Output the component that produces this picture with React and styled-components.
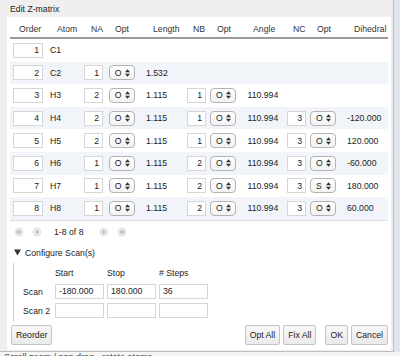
import React from 'react';
import styled, { createGlobalStyle } from 'styled-components';

const GlobalStyle = createGlobalStyle`
  html, body {
    margin: 0;
    padding: 0;
    background: #dfe5eb;
  }
  body {
    font-family: "Liberation Sans", Arial, sans-serif;
    font-size: 8.7px;
    color: #222;
  }
`;

const Screen = styled.div`
  width: 400px;
  height: 356px;
  overflow: hidden;
  display: flex;
  flex-direction: column;
`;

const Dialog = styled.div`
  width: 394px;
  height: 352px;
  box-sizing: border-box;
  flex-shrink: 0;
  display: flex;
  flex-direction: column;
  background: #efefef;
  border-right: 1px solid #bdbdbd;
  border-bottom: 1px solid #bdbdbd;
`;

const TitleBar = styled.div`
  height: 17px;
  display: flex;
  align-items: center;
  padding-left: 10px;
  color: #1e1e1e;
`;

const Content = styled.div`
  flex: 1;
  background: #fff;
  margin: 0 2px 1px 7px;
  padding: 4px 3px 0 3px;
  display: flex;
  flex-direction: column;
`;

const COLS = '37px 34px 25px 34px 43px 25px 34px 41px 25px 34px 48px';

const columns = [
  { label: 'Order', head: 9, cell: 3 },
  { label: 'Atom', head: 10, cell: 3 },
  { label: 'NA', head: 10, cell: 3 },
  { label: 'Opt', head: 9, cell: 2.7 },
  { label: 'Length', head: 13, cell: 6 },
  { label: 'NB', head: 10, cell: 4 },
  { label: 'Opt', head: 9, cell: 2 },
  { label: 'Angle', head: 11, cell: 5.5 },
  { label: 'NC', head: 10, cell: 4 },
  { label: 'Opt', head: 9, cell: 2 },
  { label: 'Dihedral', head: 12, cell: 5 },
];

const rows = [
  { order: 1, atom: 'C1' },
  { order: 2, atom: 'C2', na: 1, naOpt: 'O', length: '1.532' },
  { order: 3, atom: 'H3', na: 2, naOpt: 'O', length: '1.115', nb: 1, nbOpt: 'O', angle: '110.994' },
  { order: 4, atom: 'H4', na: 2, naOpt: 'O', length: '1.115', nb: 1, nbOpt: 'O', angle: '110.994', nc: 3, ncOpt: 'O', dihedral: '-120.000' },
  { order: 5, atom: 'H5', na: 2, naOpt: 'O', length: '1.115', nb: 1, nbOpt: 'O', angle: '110.994', nc: 3, ncOpt: 'O', dihedral: '120.000' },
  { order: 6, atom: 'H6', na: 1, naOpt: 'O', length: '1.115', nb: 2, nbOpt: 'O', angle: '110.994', nc: 3, ncOpt: 'O', dihedral: '-60.000' },
  { order: 7, atom: 'H7', na: 1, naOpt: 'O', length: '1.115', nb: 2, nbOpt: 'O', angle: '110.994', nc: 3, ncOpt: 'S', dihedral: '180.000' },
  { order: 8, atom: 'H8', na: 1, naOpt: 'O', length: '1.115', nb: 2, nbOpt: 'O', angle: '110.994', nc: 3, ncOpt: 'O', dihedral: '60.000' },
];

const Table = styled.div`
  display: flex;
  flex-direction: column;
  border-bottom: 1px solid #dedede;
`;

const HeadRow = styled.div`
  display: grid;
  grid-template-columns: ${COLS};
  height: 16px;
  border-bottom: 2px solid #9a9a9a;
  color: #333;
`;

const Row = styled.div`
  display: grid;
  grid-template-columns: ${COLS};
  height: 22.6px;
  background: ${(p) => (p.$striped ? '#f1f5fa' : '#fff')};
`;

const Cell = styled.div`
  display: flex;
  align-items: center;
  padding-left: ${(p) => p.$pad}px;
  white-space: nowrap;
`;

const NumBox = styled.div`
  box-sizing: border-box;
  width: ${(p) => p.$w}px;
  height: 15px;
  border: 1px solid #d6d6d6;
  background: #fff;
  display: flex;
  align-items: center;
  justify-content: ${(p) => (p.$left ? 'flex-start' : 'flex-end')};
  padding: 0 3px;
`;

const OptBox = styled.div`
  box-sizing: border-box;
  width: 26px;
  height: 15px;
  border: 1px solid #b3b3b3;
  border-radius: 4px;
  background: linear-gradient(#fdfdfd, #f3f3f3);
  display: flex;
  align-items: center;
  justify-content: space-between;
  padding: 0 4px 0 5px;
`;

const Arrows = () => (
  <svg width="5" height="8" viewBox="0 0 5 8">
    <polygon points="0,3.3 2.5,0.3 5,3.3" fill="#333" />
    <polygon points="0,4.7 2.5,7.7 5,4.7" fill="#333" />
  </svg>
);

const Opt = ({ value }) => (
  <OptBox>
    <span>{value}</span>
    <Arrows />
  </OptBox>
);

const Pager = styled.div`
  height: 22px;
  display: flex;
  align-items: center;
  gap: 8px;
  padding-left: 4px;
`;

const PagerText = styled.span`
  margin: 0 8px 0 4px;
`;

const PageIcon = ({ kind }) => (
  <svg width="10" height="10" viewBox="0 0 10 10">
    <circle cx="5" cy="5" r="4.5" fill="#e7e7e7" />
    {kind === 'first' && (
      <>
        <rect x="3" y="3" width="0.9" height="4" fill="#a9a9a9" />
        <polygon points="6.5,3 4.2,5 6.5,7" fill="#a9a9a9" />
      </>
    )}
    {kind === 'prev' && <polygon points="6,3 3.7,5 6,7" fill="#a9a9a9" />}
    {kind === 'next' && <polygon points="4,3 6.3,5 4,7" fill="#a9a9a9" />}
    {kind === 'last' && (
      <>
        <polygon points="3.5,3 5.8,5 3.5,7" fill="#a9a9a9" />
        <rect x="6.1" y="3" width="0.9" height="4" fill="#a9a9a9" />
      </>
    )}
  </svg>
);

const Disclosure = styled.div`
  height: 20px;
  display: flex;
  align-items: center;
  gap: 4px;
  padding-left: 4px;
`;

const ScanBlock = styled.div`
  margin-left: 3px;
  border-left: 1px solid #cdcdcd;
  height: 58px;
  box-sizing: border-box;
  padding-top: 2px;
  display: grid;
  grid-template-columns: 38px 49px 49px 49px;
  grid-template-rows: 17px 17px 17px;
  column-gap: 3px;
  row-gap: 2px;
`;

const ScanLabel = styled.div`
  display: flex;
  align-items: center;
  padding-left: ${(p) => p.$pad || 0}px;
`;

const ButtonBar = styled.div`
  margin-top: 4px;
  display: flex;
  align-items: center;
  padding: 0 0 0 1px;
`;

const Spacer = styled.div`
  flex: 1;
`;

const Button = styled.button`
  height: 20px;
  padding: 0 4px;
  margin-left: ${(p) => p.$gap || 0}px;
  font-family: inherit;
  font-size: 8.7px;
  color: #222;
  border: 1px solid #c4c4c4;
  border-radius: 2px;
  background: linear-gradient(#f8f8f8, #eaeaea);
`;

const Beneath = styled.div`
  height: 4px;
  overflow: hidden;
  background: #f5f5f5;
  color: #444;
  font-size: 9px;
  line-height: 9px;
  padding: 1px 0 0 4px;
  white-space: nowrap;
`;

const App = () => {
  return (
    <Screen>
      <GlobalStyle />
      <Dialog>
        <TitleBar>Edit Z-matrix</TitleBar>
        <Content>
          <Table>
            <HeadRow>
              {columns.map((c, i) => (
                <Cell key={i} $pad={c.head}>{c.label}</Cell>
              ))}
            </HeadRow>
            {rows.map((r, i) => (
              <Row key={r.order} $striped={i % 2 === 1}>
                <Cell $pad={columns[0].cell}><NumBox $w={30}>{r.order}</NumBox></Cell>
                <Cell $pad={columns[1].cell}>{r.atom}</Cell>
                <Cell $pad={columns[2].cell}>{r.na && <NumBox $w={19}>{r.na}</NumBox>}</Cell>
                <Cell $pad={columns[3].cell}>{r.naOpt && <Opt value={r.naOpt} />}</Cell>
                <Cell $pad={columns[4].cell}>{r.length}</Cell>
                <Cell $pad={columns[5].cell}>{r.nb && <NumBox $w={19}>{r.nb}</NumBox>}</Cell>
                <Cell $pad={columns[6].cell}>{r.nbOpt && <Opt value={r.nbOpt} />}</Cell>
                <Cell $pad={columns[7].cell}>{r.angle}</Cell>
                <Cell $pad={columns[8].cell}>{r.nc && <NumBox $w={19}>{r.nc}</NumBox>}</Cell>
                <Cell $pad={columns[9].cell}>{r.ncOpt && <Opt value={r.ncOpt} />}</Cell>
                <Cell $pad={columns[10].cell}>{r.dihedral}</Cell>
              </Row>
            ))}
          </Table>

          <Pager>
            <PageIcon kind="first" />
            <PageIcon kind="prev" />
            <PagerText>1-8 of 8</PagerText>
            <PageIcon kind="next" />
            <PageIcon kind="last" />
          </Pager>

          <Disclosure>
            <svg width="7" height="7" viewBox="0 0 7 7">
              <polygon points="0,0.5 7,0.5 3.5,6.5" fill="#333" />
            </svg>
            <span>Configure Scan(s)</span>
          </Disclosure>

          <ScanBlock>
            <span />
            <ScanLabel>Start</ScanLabel>
            <ScanLabel>Stop</ScanLabel>
            <ScanLabel># Steps</ScanLabel>
            <ScanLabel $pad={9}>Scan</ScanLabel>
            <NumBox $w={49} $left>-180.000</NumBox>
            <NumBox $w={49} $left>180.000</NumBox>
            <NumBox $w={49} $left>36</NumBox>
            <ScanLabel $pad={9}>Scan 2</ScanLabel>
            <NumBox $w={49} $left />
            <NumBox $w={49} $left />
            <NumBox $w={49} $left />
          </ScanBlock>

          <ButtonBar>
            <Button>Reorder</Button>
            <Spacer />
            <Button>Opt All</Button>
            <Button $gap={3}>Fix All</Button>
            <Button $gap={9}>OK</Button>
            <Button $gap={3}>Cancel</Button>
          </ButtonBar>
        </Content>
      </Dialog>
      <Beneath>Scroll zoom / pan drag - rotate atoms</Beneath>
    </Screen>
  );
};

export default App;
